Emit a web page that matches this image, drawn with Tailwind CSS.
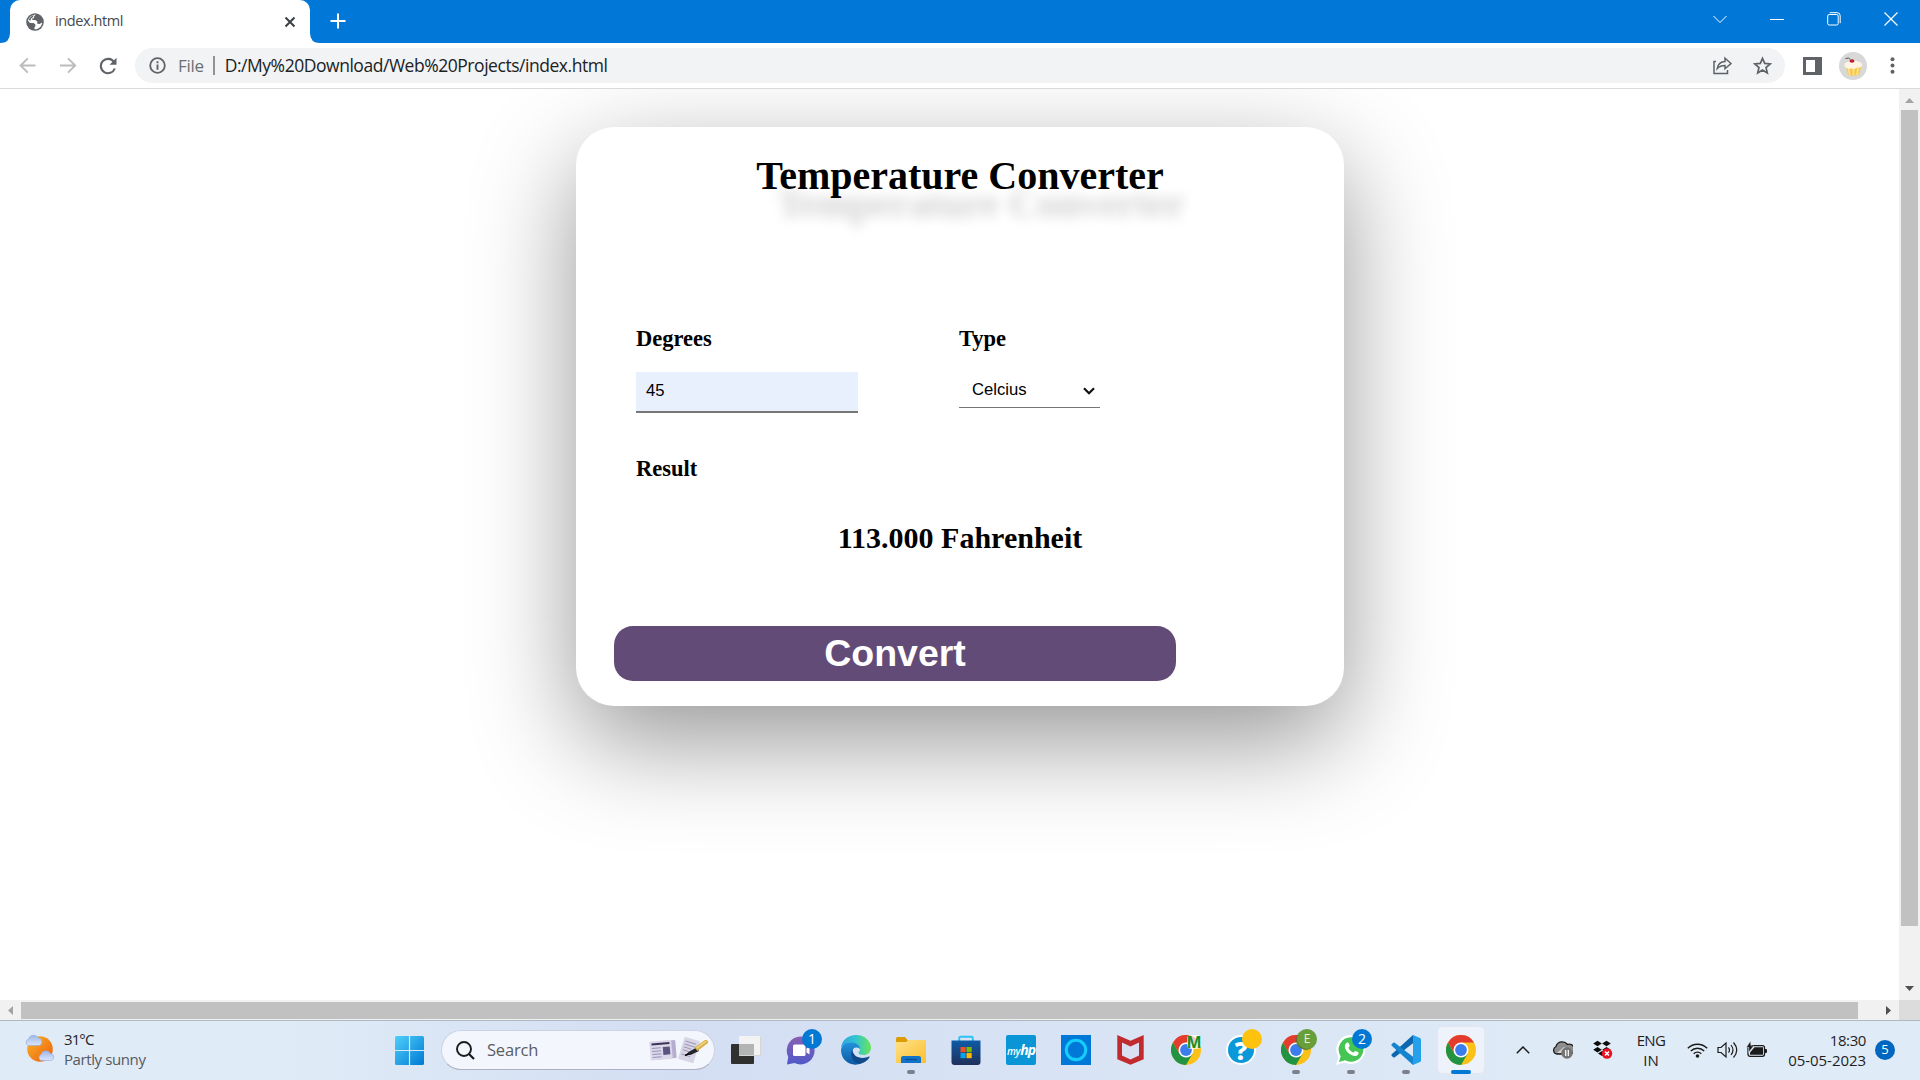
<!DOCTYPE html>
<html lang="en">
<head>
<meta charset="utf-8">
<title>index.html</title>
<script src="https://cdn.jsdelivr.net/npm/@tailwindcss/browser@4"></script>
</head>
<body class="w-[1920px] h-[1080px] overflow-hidden flex flex-col bg-white font-['Open_Sans','Noto_Sans',sans-serif] text-[#1f1f1f]">

<!-- Tab strip -->
<header class="h-[43px] shrink-0 bg-[#0178d7] flex justify-between">
  <div class="flex">
    <svg class="w-[10px] h-[43px]" viewBox="0 0 10 43"><path d="M0 43q10 0 10-10v10z" fill="#fff"/></svg>
    <div class="w-[300px] h-[43px] bg-white rounded-t-[10px] flex items-center pl-4 pr-[14px]">
      <svg class="w-[18px] h-[18px]" viewBox="0 0 18 18"><circle cx="9" cy="9" r="8.8" fill="#5f6368"/><path d="M9.800 1.800 8 3.600v1.600H6.400L6.300 7l3 .1 2 1.500v2.200l2.200.2 2.700-1.600C16 13 13 16.200 9 16.200c-1-.6-.8-2 .4-3V11.500L7.500 10H4L1.900 7.800C2.600 4.500 5.500 1.800 9.800 1.800z" fill="#fff"/><path d="M2.500 7.300C3.500 4.500 5.500 2.700 8 2.200L6.500 4.500 5 5.500 4.500 7.500z" fill="#5f6368"/></svg>
      <span class="ml-[11px] text-[14.500px] tracking-[-0.4px] text-[#45494d] leading-5 -mt-px">index.html</span>
      <svg class="ml-auto w-[12px] h-[12px]" viewBox="0 0 12 12"><path d="M1.500 1.500l9 9M10.500 1.500l-9 9" stroke="#3c4043" stroke-width="2"/></svg>
    </div>
    <svg class="w-[10px] h-[43px]" viewBox="0 0 10 43"><path d="M10 43q-10 0-10-10v10z" fill="#fff"/></svg>
    <svg class="ml-[9.500px] mt-[13px] w-4 h-4" viewBox="0 0 16 16"><path d="M8 .5v15M.5 8h15" stroke="#fff" stroke-width="2"/></svg>
  </div>
  <div class="flex items-center pr-[22px] gap-[43px] pb-[6px]">
    <svg class="w-[14px] h-[14px]" viewBox="0 0 14 14" fill="none" stroke="#fff"><path d="M.5 4 7 10.500 13.500 4" stroke-width="1"/></svg>
    <svg class="w-[14px] h-[14px]" viewBox="0 0 14 14"><path d="M0 7.500h14" stroke="#fff"/></svg>
    <svg class="w-[14px] h-[14px]" viewBox="0 0 14 14" fill="none" stroke="#fff"><rect x=".7" y="2.500" width="10.500" height="10.500" rx="1.500"/><path d="M2.700.7h7.500a3 3 0 0 1 3 3v7.500"/></svg>
    <svg class="w-[14px] h-[14px]" viewBox="0 0 14 14"><path d="M.5.5l13 13M13.500.5l-13 13" stroke="#fff" stroke-width="1.200"/></svg>
  </div>
</header>

<!-- Toolbar -->
<div class="h-[46px] shrink-0 bg-white border-b border-[#d9dadc] flex items-center pl-[19px]">
  <svg class="w-[17px] h-[17px]" viewBox="0 0 17 17" fill="none" stroke="#babcbe" stroke-width="1.900"><path d="M16.500 8.500H1.800M8.800 1.300 1.600 8.500l7.200 7.200"/></svg>
  <svg class="ml-6 w-[17px] h-[17px]" viewBox="0 0 17 17" fill="none" stroke="#babcbe" stroke-width="1.900"><path d="M0 8.500h15M8 1.300l7.200 7.200L8 15.700"/></svg>
  <svg class="ml-[22px] w-[18px] h-[18px]" viewBox="0 0 18 18"><path d="M15 5A7.200 7.200 0 1 0 15.800 11.500" fill="none" stroke="#5f6368" stroke-width="2.100"/><path d="M17.500.8v6.900h-6.900z" fill="#5f6368"/></svg>
  <div class="ml-[18px] w-[1650px] h-[35px] rounded-full bg-[#f1f3f4] flex items-center pl-[14px] pr-[13px]">
    <svg class="w-[17px] h-[17px]" viewBox="0 0 17 17"><circle cx="8.500" cy="8.500" r="7.300" fill="none" stroke="#5f6368" stroke-width="1.800"/><path d="M8.500 7.500v5.200M8.500 4.300v1.900" stroke="#5f6368" stroke-width="1.900"/></svg>
    <span class="ml-[12px] text-[17px] tracking-[-0.3px] text-[#6b6f73] leading-6">File</span>
    <span class="ml-[9px] w-[2px] h-[19px] bg-[#909499]"></span>
    <span class="ml-[10px] pb-[2px] text-[17.500px] tracking-[-0.46px] text-[#202124] leading-6">D:/My%20Download/Web%20Projects/index.html</span>
    <svg class="ml-auto w-[19px] h-[19px]" viewBox="0 0 19 19" fill="none" stroke="#5f6368" stroke-width="1.500"><path d="M3 5.500H1v12h13.500V14"/><path d="M4.300 12.500C5 8.500 7.500 5.700 12 5.600V2.200l6 5.300-6 5.200V9.400c-3.500 0-5.600.8-7.700 3.100z"/></svg>
    <svg class="ml-[21px] w-[19px] h-[19px]" viewBox="0 0 19 19" fill="none" stroke="#5f6368" stroke-width="1.700"><path d="M9.500 2.300l2.200 5.100 5.500.5-4.200 3.600 1.300 5.400-4.800-2.900-4.800 2.900 1.300-5.400L1.800 7.900l5.500-.5z"/></svg>
  </div>
  <svg class="ml-[18px] w-[19px] h-[18px]" viewBox="0 0 19 18"><path d="M0 0h19v18H0zM3 3v12h9V3z" fill="#5f6368" fill-rule="evenodd"/></svg>
  <svg class="ml-[17px] w-7 h-7" viewBox="0 0 28 28"><circle cx="14" cy="14" r="14" fill="#d8d8d8"/><path d="M6.500 14.500h16l-3 8.500q-5 1.500-10 0z" fill="#f4c84e"/><path d="M9.500 16l1.200 7M14.500 16v7.500M19 16l-1 7" stroke="#fbe38f" stroke-width="1.700"/><path d="M5.500 14c-.5-3 2-4 3.500-4 1-2.500 9-2.500 10.500 0 2 0 4.500 1.500 3.500 4-1.500 2.500-5 1-6.500 2.500-2 1-3-.5-4.500 0-3 .8-6-.5-6.500-2.500z" fill="#fff3e6"/><ellipse cx="13" cy="9" rx="2.500" ry="1.700" fill="#b8202c"/><path d="M11.500 7.500 9.500 6 6.500 6.500" stroke="#555" fill="none"/></svg>
  <svg class="ml-[23px] w-[5px] h-[17px]" viewBox="0 0 5 17" fill="#5f6368"><circle cx="2.500" cy="2.200" r="2"/><circle cx="2.500" cy="8.500" r="2"/><circle cx="2.500" cy="14.800" r="2"/></svg>
</div>

<!-- Viewport -->
<div class="h-[911px] shrink-0 flex">
  <main class="w-[1899px] overflow-hidden pl-[576px] pt-[38px] text-black">
    <section class="w-[768px] h-[579px] rounded-[38px] bg-white shadow-[0_35px_102px_rgba(0,0,0,0.41)] pt-6 font-['Liberation_Serif',serif]">
      <h1 class="text-center text-[40px] font-bold leading-[50px] [text-shadow:21px_28px_13px_rgba(0,0,0,0.19)]">Temperature Converter</h1>
      <div class="mt-[124px] pl-[60px] flex">
        <div class="w-[323px]">
          <h3 class="text-[22.500px] font-bold leading-[28px]">Degrees</h3>
          <div class="mt-[19px] w-[222px] h-[41px] bg-[#e8f0fe] border-b-2 border-[#767676] pl-[10px] font-['Liberation_Sans',sans-serif] text-[16.670px] leading-[38px]">45</div>
        </div>
        <div>
          <h3 class="text-[22.500px] font-bold leading-[28px]">Type</h3>
          <div class="mt-[19px] w-[141px] h-[36px] border-b border-[#767676] pl-[13px] pr-[5px] font-['Liberation_Sans',sans-serif] text-[16.670px] leading-[35px] flex items-center justify-between"><span>Celcius</span>
            <svg class="mt-[2px] w-3 h-2" viewBox="0 0 12 8"><path d="M1 1.200l5 5 5-5" fill="none" stroke="#101010" stroke-width="2.200"/></svg>
          </div>
        </div>
      </div>
      <h3 class="mt-[42px] pl-[60px] text-[22.500px] font-bold leading-[28px]">Result</h3>
      <h2 class="mt-[37px] text-center text-[30px] font-bold leading-[36px]">113.000 Fahrenheit</h2>
      <div class="mt-[70px] ml-[38px] w-[562px] h-[55px] rounded-[19px] bg-[#634b78] text-white text-center font-['Liberation_Sans',sans-serif] font-bold text-[37.500px] leading-[54px]">Convert</div>
    </section>
  </main>
  <div class="w-[21px] bg-[#f1f1f1] flex flex-col items-center">
    <svg class="mt-[9px] w-[9px] h-[5px]" viewBox="0 0 9 5"><path d="M0 5 4.500 0 9 5z" fill="#a3a3a3"/></svg>
    <div class="mt-[7px] w-[17px] h-[816px] bg-[#c1c1c1]"></div>
    <svg class="mt-[60px] w-[9px] h-[5px]" viewBox="0 0 9 5"><path d="M0 0 4.500 5 9 0z" fill="#505050"/></svg>
  </div>
</div>
<div class="h-5 shrink-0 bg-[#f1f1f1] flex items-center">
  <svg class="ml-2 w-[5px] h-[9px]" viewBox="0 0 5 9"><path d="M5 0 0 4.500 5 9z" fill="#a3a3a3"/></svg>
  <div class="ml-2 w-[1837px] h-[17px] bg-[#c1c1c1]"></div>
  <svg class="ml-7 w-[5px] h-[9px]" viewBox="0 0 5 9"><path d="M0 0 5 4.500 0 9z" fill="#505050"/></svg>
  <div class="ml-auto w-[21px] h-5 bg-[#dcdcdc]"></div>
</div>

<!-- Taskbar -->
<footer class="h-[60px] shrink-0 border-t border-[#b2b8c2] bg-linear-to-r from-[#dfebf6] from-15% via-[#d3def3] via-35% to-[#dfebf6] to-85% flex">
  <div class="w-[395px] flex pl-[25px]">
    <svg class="mt-[13px] w-[30px] h-[28px]" viewBox="0 0 30 28"><defs><linearGradient id="sun" x1="0" y1="0" x2="1" y2="1"><stop offset="0" stop-color="#f9b825"/><stop offset="1" stop-color="#ee5a0e"/></linearGradient><linearGradient id="cl" x1="0" y1="0" x2="0" y2="1"><stop offset="0" stop-color="#9db7ea"/><stop offset="1" stop-color="#dbe6fb"/></linearGradient></defs><circle cx="15" cy="15" r="12.800" fill="url(#sun)"/><path d="M3.500 11.500a3.400 3.400 0 0 1 0-6.500 5.500 5.500 0 0 1 10-1 3.800 3.800 0 0 1 .5 7.500z" fill="url(#cl)" stroke="#8fa9dd" stroke-width=".6"/><path d="M16 26.500a3.200 3.200 0 0 1 0-6 5.200 5.200 0 0 1 9.500-1 3.600 3.600 0 0 1 .8 7z" fill="url(#cl)" stroke="#8fa9dd" stroke-width=".6"/></svg>
    <div class="ml-[9px] mt-[8px] text-[15px] leading-5">
      <div class="tracking-[-0.9px]">31°C</div>
      <div class="text-[#55595f] tracking-[-0.4px]">Partly sunny</div>
    </div>
  </div>
  <svg class="mt-[15px] w-[29px] h-[29px]" viewBox="0 0 29 29"><defs><linearGradient id="win" x1="0" y1="0" x2="1" y2="1"><stop offset="0" stop-color="#4fd0fb"/><stop offset="1" stop-color="#0078d4"/></linearGradient><mask id="wm"><rect width="29" height="29" rx="1.500" fill="#fff"/><path d="M14.500 0v29M0 14.500h29" stroke="#000" stroke-width="1.200"/></mask></defs><rect width="29" height="29" fill="url(#win)" mask="url(#wm)"/></svg>
  <div class="ml-[17px] mt-[9px] w-[274px] h-[40px] rounded-full bg-[#f3f6fd] border border-[#cbd3e4] border-b-[#aab2c4] flex items-center pl-[14px] pr-[5px]">
    <svg class="w-[19px] h-[19px]" viewBox="0 0 19 19" fill="none" stroke="#1b1b1b"><circle cx="8" cy="8" r="7" stroke-width="1.900"/><path d="M13 13l5 5" stroke-width="2.200"/></svg>
    <span class="ml-[12px] text-[16.500px] leading-6 text-[#5a5d63] tracking-[-0.2px]">Search</span>
    <svg class="ml-auto w-[60px] h-[28px]" viewBox="0 0 60 28"><g transform="rotate(-5 14 14)"><rect x="2" y="5" width="25" height="18" rx="1" fill="#b5aed0"/><rect x="1" y="4.500" width="22" height="19" fill="#dcd7ea"/><path d="M3 7.500h18" stroke="#3b3656" stroke-width="2"/><path d="M3 11.500h9M3 14.500h9M3 17.500h9M3 20.500h9" stroke="#9992b5"/><rect x="14" y="11" width="7" height="8" fill="#5a5480"/></g><g transform="rotate(17 40 14)"><rect x="32" y="2.500" width="16" height="23" fill="#d8d5e6"/><path d="M34 6.500h11M34 9.500h11M34 12.500h8M34 15.500h6M34 20h9" stroke="#9d99b4"/></g><path d="M37 19l2.500-3 8-4.500 2.500 3.500-8.500 4z" fill="#24242e"/><path d="M45.500 11.500 56 4q3.500-.5 3 3l-10.500 8z" fill="#d9b04a"/><path d="M47.500 12 57 5.500" stroke="#f3dc88" stroke-width="1.300"/><path d="M36 19.500l3.500-1.500" stroke="#000" stroke-width="1.500"/></svg>
  </div>

  <nav class="ml-[3.500px] flex">
    <!-- task view -->
    <div class="relative w-[55px] h-[58px] flex items-center justify-center"><svg class="w-[30px] h-[30px]" viewBox="0 0 30 30"><rect x="0" y="9" width="23" height="20" rx="1" fill="#30302e"/><rect x="8" y="1" width="22" height="20" rx="1" fill="#f3f3f3"/><path d="M8 9h15v12H8z" fill="#b3b5b5"/><path d="M8.500 20.500h21v-19" stroke="#d5d5d5" fill="none"/></svg></div>
    <!-- chat -->
    <div class="relative w-[55px] h-[58px] flex items-center justify-center"><svg class="w-[30px] h-[30px]" viewBox="0 0 30 30"><defs><linearGradient id="chat" x1="0" y1="0" x2="0" y2="1"><stop offset="0" stop-color="#8a5fb0"/><stop offset="1" stop-color="#5059c9"/></linearGradient></defs><path d="M14.500 1.500a14 14 0 1 1-6 26.600L1 29.500l1.200-7.700A14 14 0 0 1 14.500 1.500z" fill="url(#chat)"/><rect x="7" y="9.500" width="12.500" height="11.500" rx="1.500" fill="#fff"/><path d="M20.500 13.500l3-2v8l-3-2z" fill="#fff"/></svg>
      <span class="absolute left-[28.500px] top-[8px] w-5 h-5 rounded-full bg-[#0078d4] text-white text-[14px] leading-5 text-center">1</span></div>
    <!-- edge -->
    <div class="relative w-[55px] h-[58px] flex items-center justify-center"><svg class="w-[30px] h-[30px]" viewBox="0 0 30 30"><defs><linearGradient id="e1" x1="0" y1=".3" x2="1" y2=".3"><stop offset="0" stop-color="#2fa4e0"/><stop offset=".5" stop-color="#32c5cf"/><stop offset="1" stop-color="#6be556"/></linearGradient><linearGradient id="e2" x1="0" y1="0" x2="0" y2="1"><stop offset="0" stop-color="#2392dc"/><stop offset="1" stop-color="#0c59a4"/></linearGradient></defs><path d="M0 13C1 5 7 0 15 0c9 0 15 6.500 15 12.500 0 5-3.500 7.500-7.500 7.500-3 0-5-1-5-2.300 0-.9 1.500-1.300 1.500-3.700 0-3-3-5.500-8-5.500C6 8.500 2 10 0 13z" fill="url(#e1)"/><path d="M0 15C.3 10.500 5 7.500 10 7.500c6 0 9 3 9 6.500-4-3-8-1-8 4 0 7 6 10 10 10C11 33 0 26 0 15z" fill="url(#e2)"/><path d="M11.500 14C8 20 12 29.500 20 28.500c4-1 7-3.500 8.500-6.300.3-.7-.3-1-.8-.7C21 25 11 22 11.500 14z" fill="#114a8b"/></svg></div>
    <!-- explorer -->
    <div class="relative w-[55px] h-[58px] flex items-center justify-center"><svg class="w-[30px] h-[30px]" viewBox="0 0 30 30"><defs><linearGradient id="fo" x1="0" y1="0" x2="1" y2="1"><stop offset="0" stop-color="#ffe08a"/><stop offset="1" stop-color="#fbc02d"/></linearGradient></defs><path d="M0 3.500Q0 2 1.500 2H9l3 3.500V12H0z" fill="#dd9b06"/><path d="M0 7h10l2.500-2H29q1 0 1 1v22H0z" fill="url(#fo)"/><path d="M5 28v-5q0-2 2-2h16q2 0 2 2v5z" fill="#1273c8"/><path d="M9 24.500h12" stroke="#0b4f92" stroke-width="1.200"/></svg>
      <span class="absolute left-[23.500px] top-[49px] w-[8px] h-[4px] rounded-full bg-[#7c808a]"></span></div>
    <!-- store -->
    <div class="relative w-[55px] h-[58px] flex items-center justify-center"><svg class="w-[30px] h-[30px]" viewBox="0 0 30 30"><defs><linearGradient id="st" x1="0" y1="0" x2="0" y2="1"><stop offset="0" stop-color="#0e5ba8"/><stop offset="1" stop-color="#20305a"/></linearGradient></defs><path d="M8.200 6V3q0-1.200 1.300-1.200h11Q21.800 1.800 21.800 3v3" fill="none" stroke="#2fc3f5" stroke-width="1.900"/><path d="M.5 5.500h29V27q0 3-3 3h-23q-3 0-3-3z" fill="url(#st)"/><path d="M9.500 12h5.200v5.200H9.500z" fill="#f25022"/><path d="M15.500 12h5.200v5.200h-5.200z" fill="#7fba00"/><path d="M9.500 18h5.200v5.200H9.500z" fill="#00a4ef"/><path d="M15.500 18h5.200v5.200h-5.200z" fill="#ffb900"/></svg></div>
    <!-- myhp -->
    <div class="relative w-[55px] h-[58px] flex items-center justify-center"><div class="w-[30px] h-[30px] rounded-[2px] bg-[#0a96d6] text-white italic leading-[28px] text-center whitespace-nowrap"><span class="text-[10px] font-semibold tracking-[-0.3px]">my</span><span class="text-[14px] font-bold tracking-[-1px]">hp</span></div></div>
    <!-- alexa -->
    <div class="relative w-[55px] h-[58px] flex items-center justify-center"><svg class="w-[30px] h-[30px]" viewBox="0 0 30 30"><path d="M0 0h30v30H0z" fill="#0078d7"/><circle cx="15" cy="15" r="9.700" fill="none" stroke="#15cdfb" stroke-width="3"/><path d="M13 22.500l.5 3.800 6-2.600z" fill="#15cdfb"/></svg></div>
    <!-- mcafee -->
    <div class="relative w-[55px] h-[58px] flex items-center justify-center"><svg class="w-[30px] h-[30px]" viewBox="0 0 30 30"><path d="M1.300 0 14.500 5.700 27.700 0v24.300l-13.200 5.400-13.200-5.400z" fill="#c22b2e"/><path d="M6 7.500l8.500 4 8.500-4v13l-8.500 4L6 20.500z" fill="#d9e0f2"/></svg></div>
    <!-- chrome, profile M -->
    <div class="relative w-[55px] h-[58px] flex items-center justify-center"><svg class="w-[30px] h-[30px]" viewBox="0 0 30 30"><defs><g id="chrome"><circle cx="15" cy="15" r="15" fill="#fbc116"/><path d="M2 7.500A15 15 0 0 0 15 30l6.500-11.200L15 15 8.500 18.800z" fill="#229342"/><path d="M15 7.500H28A15 15 0 0 0 2 7.500l6.500 11.200z" fill="#e33b2e"/><circle cx="15" cy="15" r="7.500" fill="#fff"/><circle cx="15" cy="15" r="5.900" fill="#3b7ded"/></g></defs><use href="#chrome"/></svg>
      <span class="absolute left-[28.500px] top-[14px] w-[14px] h-[14px] rounded-[4px] bg-white/70 text-[#159027] text-[16px] font-bold leading-[15px] text-center flex justify-center">M</span></div>
    <!-- help -->
    <div class="relative w-[55px] h-[58px] flex items-center justify-center"><div class="w-[30px] h-[30px] rounded-full bg-[#0a98d8] border-2 border-white text-white text-[25px] font-extrabold leading-[26px] text-center">?</div>
      <span class="absolute left-[28.500px] top-[8px] w-5 h-5 rounded-full bg-[#ffc20e]"></span></div>
    <!-- chrome, profile E -->
    <div class="relative w-[55px] h-[58px] flex items-center justify-center"><svg class="w-[30px] h-[30px]" viewBox="0 0 30 30"><use href="#chrome"/></svg>
      <span class="absolute left-[28.500px] top-[8px] w-5 h-5 rounded-full bg-[#689f38] shadow-[-1px_1px_1px_#55752f] text-[#e8f2da] text-[12px] leading-5 text-center">E</span>
      <span class="absolute left-[23.500px] top-[49px] w-[8px] h-[4px] rounded-full bg-[#7c808a]"></span></div>
    <!-- whatsapp -->
    <div class="relative w-[55px] h-[58px] flex items-center justify-center"><svg class="w-[30px] h-[30px]" viewBox="0 0 30 30"><path d="M15.500 0A14.500 14.500 0 1 1 8.500 27.500L0 30l2.500-8A14.500 14.500 0 0 1 15.500 0z" fill="#fff"/><path d="M15.500 2.200A12.300 12.300 0 1 1 9 25.200l-6 1.700 1.700-5.700A12.300 12.300 0 0 1 15.500 2.200z" fill="#45c554"/><path d="M10.500 8c1-.8 1.800-.6 2.200.3l1 2.300c.3 1-1.200 1.800-1.200 2.300.8 2 2.700 3.800 4.700 4.500.7.100 1.500-1.700 2.200-1.500l2.500 1.200c1 .5.8 1.500.2 2.400-1.400 1.800-3.500 1.800-5.600 1-3.500-1.300-6-3.800-7.300-7-.7-2.200-.3-4.300 1.300-5.500z" fill="#fff"/></svg>
      <span class="absolute left-[28.500px] top-[8px] w-5 h-5 rounded-full bg-[#0078d4] text-white text-[14px] leading-5 text-center">2</span>
      <span class="absolute left-[23.500px] top-[49px] w-[8px] h-[4px] rounded-full bg-[#7c808a]"></span></div>
    <!-- vs code -->
    <div class="relative w-[55px] h-[58px] flex items-center justify-center"><svg class="w-[30px] h-[30px]" viewBox="0 0 30 30"><path d="M22 0 .7 19.200q-.7.8 0 1.600l1.500 1.400q.8.6 1.600 0L22 8.300z" fill="#0a67b0"/><path d="M22 30 .7 10.800q-.7-.8 0-1.600l1.500-1.400q.8-.6 1.600 0L22 21.700z" fill="#1584cf"/><path d="M22 0l7 3q1 .5 1 1.500v21q0 1-1 1.500l-7 3z" fill="#25a0ea"/></svg>
      <span class="absolute left-[23.500px] top-[49px] w-[8px] h-[4px] rounded-full bg-[#7c808a]"></span></div>
    <!-- chrome, active -->
    <div class="relative w-[55px] h-[58px] flex items-center justify-center"><div class="w-[48px] h-[48px] rounded-[5px] bg-[#eef2fa] border border-[#e2e7f2] flex items-center justify-center"><svg class="w-[30px] h-[30px]" viewBox="0 0 30 30"><use href="#chrome"/></svg></div>
      <span class="absolute left-[17.500px] top-[49px] w-5 h-[4px] rounded-full bg-[#0078d4]"></span></div>
  </nav>

  <!-- tray -->
  <div class="ml-auto pr-[25px] pb-[2px] flex items-center">
    <svg class="w-[14px] h-[8px]" viewBox="0 0 14 8"><path d="M.8 7.200 7 1l6.200 6.200" fill="none" stroke="#1b1b1b" stroke-width="1.500"/></svg>
    <svg class="ml-[22px] w-[21px] h-[19px]" viewBox="0 0 21 19"><path d="M4.500 14A4 4 0 0 1 4 6.500 6.500 6.500 0 0 1 15.500 4.500 5 5 0 0 1 19 14z" fill="#8e8e8e" stroke="#1c1c1c" stroke-width="1.300"/><path d="M5 13 12 7l7 6z" fill="#d6d6d6"/><circle cx="15" cy="13" r="5.800" fill="#757575"/><path d="M13.700 10v6M16.300 10v6" stroke="#fff" stroke-width="1.200"/></svg>
    <svg class="ml-5 w-[20px] h-[19px]" viewBox="0 0 20 19"><path d="M4.500.7 8.800 3.500 4.500 6.300.2 3.500zM13.500.7l4.300 2.800-4.300 2.800-4.300-2.800zM4.500 6.900l4.300 2.800-4.300 2.800L.2 9.700zM13.500 6.900l4.300 2.800-4.300 2.800-4.300-2.800zM9 11l4 2.600L9 16l-4-2.400z" fill="#0c0c0c"/><circle cx="14" cy="13.500" r="5.200" fill="#e81123"/><path d="M12 11.500l4 4M16 11.500l-4 4" stroke="#fff" stroke-width="1.500"/></svg>
    <div class="ml-[22px] w-[32px] text-center text-[15px] leading-5"><span class="tracking-[-0.6px]">ENG</span><br><span>IN</span></div>
    <svg class="ml-[20px] w-[21px] h-[16px]" viewBox="0 0 21 16" fill="none" stroke="#1b1b1b" stroke-width="1.400"><path d="M.8 6.300a13.500 13.500 0 0 1 19.400 0M3.800 9a9.500 9.500 0 0 1 13.400 0M6.700 11.700a5.400 5.400 0 0 1 7.600 0"/><circle cx="10.500" cy="14" r="1.800" fill="#1b1b1b" stroke="none"/></svg>
    <svg class="ml-[9px] w-[21px] h-[18px]" viewBox="0 0 21 18" fill="none" stroke="#1b1b1b" stroke-width="1.200"><path d="M1 6.500h3L9 2v14l-5-4.500H1z"/><path d="M11.500 6.300q2 2.700 0 5.400M14 4q4 5 0 10M16.500 1.500q6.500 7.500 0 15"/></svg>
    <svg class="ml-[8px] w-[22px] h-[17px]" viewBox="0 0 22 17"><rect x="2" y="4.700" width="16.500" height="10.600" rx="2" fill="none" stroke="#1b1b1b" stroke-width="1.300"/><path d="M4 13.800V11.500L8.500 6.200H17v7.600z" fill="#1b1b1b"/><path d="M19 8h1q1 0 1 1v2q0 1-1 1h-1z" fill="#1b1b1b"/><path d="M4.500 0 .3 6.500h2.700l-.6 5L7.800 5H5z" fill="#1b1b1b" stroke="#dfebf6" stroke-width=".5"/></svg>
    <div class="ml-[18px] w-[80px] text-right text-[15px] leading-5"><span class="tracking-[-0.4px]">18:30</span><br><span class="tracking-[-0.05px]">05-05-2023</span></div>
    <span class="ml-[9px] w-5 h-5 rounded-full bg-[#0067c0] text-white text-[13px] leading-[19px] text-center">5</span>
  </div>
</footer>
</body>
</html>
